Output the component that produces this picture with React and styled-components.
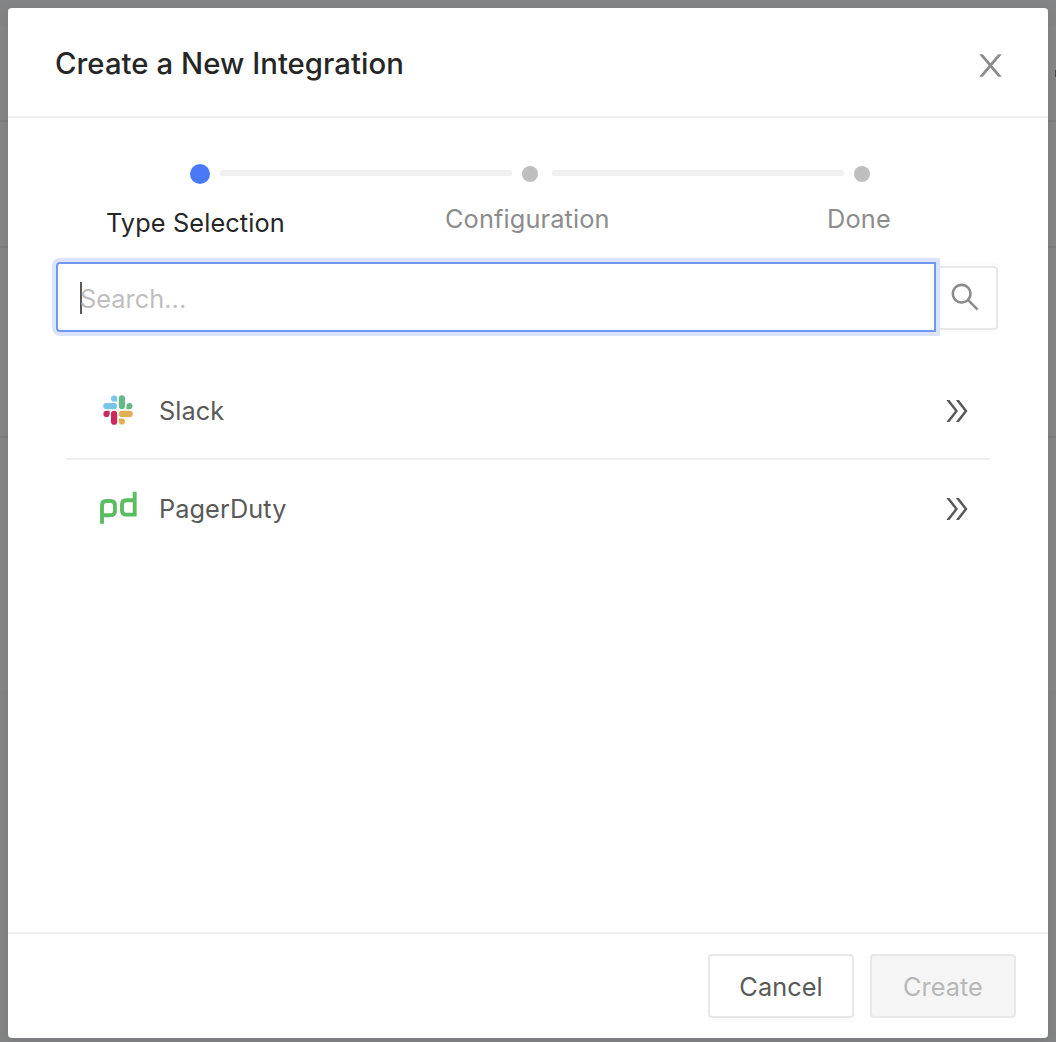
import React from 'react';
import styled, { createGlobalStyle, css } from 'styled-components';

const GlobalStyle = createGlobalStyle`
  * { box-sizing: border-box; }
  body {
    margin: 0;
    font-family: Inter, "Liberation Sans", sans-serif;
    font-size: 25.3px;
    color: #595959;
    overflow: hidden;
  }
  button, input { font: inherit; letter-spacing: inherit; }
  svg { display: block; }
`;

const Page = styled.div`
  position: relative;
  height: 1042px;
  display: flex;
  flex-direction: column;
  overflow: hidden;
`;

const Band = styled.div`
  flex: none;
  height: ${(p) => p.$height}px;
  display: flex;
  align-items: center;
  justify-content: flex-end;
  background: ${(p) => (p.$cool ? '#828486' : '#868686')};
  ${(p) => p.$ruled && css`border-bottom: 2px solid #7d7d7d;`}
`;

const BandMark = styled.span`
  width: 1px;
  height: 7px;
  background: #4a4a4a;
`;

const Overlay = styled.div`
  position: absolute;
  inset: 0;
  padding: 8px 8px 4px;
  display: flex;
`;

const Dialog = styled.section`
  flex: 1;
  display: flex;
  flex-direction: column;
  background: #fff;
  border-radius: 4px;
  box-shadow: 0 4px 16px rgba(0, 0, 0, 0.08);
`;

const Header = styled.header`
  height: 110px;
  padding: 0 42px 0 47px;
  display: flex;
  align-items: center;
  justify-content: space-between;
  border-bottom: 2px solid #efefef;
`;

const Title = styled.h1`
  margin: 0;
  padding-top: 4px;
  font-size: 29.3px;
  line-height: 44px;
  font-weight: 500;
  letter-spacing: 0.05px;
  color: #262626;
`;

const CloseButton = styled.button`
  padding: 6px 0 0;
  border: 0;
  background: none;
  color: #8c8c8c;
`;

const Body = styled.main`
  flex: 1;
  padding: 38px 50px 0 48px;
`;

const Steps = styled.ol`
  height: 106px;
  margin: 0;
  padding: 0;
  list-style: none;
  display: grid;
  grid-template-columns: 304px 332px 306px;
`;

const Step = styled.li`
  display: flex;
  flex-direction: column;
`;

const Track = styled.div`
  height: 36px;
  padding-left: ${(p) => p.$indent}px;
  display: flex;
  align-items: center;
`;

const Dot = styled.span`
  flex: none;
  width: ${(p) => (p.$active ? 20 : 16)}px;
  height: ${(p) => (p.$active ? 20 : 16)}px;
  border-radius: 50%;
  background: ${(p) => (p.$active ? '#4a79f8' : '#bfbfbf')};
`;

const Line = styled.span`
  flex: none;
  width: 292px;
  height: 6px;
  margin: 0 10px 2px ${(p) => p.$gap}px;
  border-radius: 2px;
  background: #f0f0f0;
`;

const StepLabel = styled.span`
  padding-left: ${(p) => p.$indent}px;
  margin-top: ${(p) => (p.$active ? 13 : 9)}px;
  line-height: 36px;
  white-space: nowrap;
  letter-spacing: ${(p) => p.$track}px;
  color: ${(p) => (p.$active ? '#262626' : '#8c8c8c')};
`;

const SearchBar = styled.div`
  display: flex;
  align-items: center;
`;

const SearchField = styled.div`
  z-index: 1;
  width: 880px;
  height: 70px;
  padding: 0 22px;
  display: flex;
  align-items: center;
  border: 2px solid #7096f8;
  border-radius: 4px 0 0 4px;
  background: #fff;
  box-shadow: 0 0 0 4px #dbe3fd;
`;

const Caret = styled.span`
  width: 2px;
  height: 32px;
  margin: 2px -2px 0 0;
  background: #595959;
`;

const Placeholder = styled.span`
  padding-top: 2px;
  color: #bfbfbf;
  letter-spacing: 0.05px;
`;

const SearchButton = styled.button`
  width: 62px;
  height: 64px;
  margin-top: 2px;
  padding: 0 0 2px 14px;
  display: flex;
  align-items: center;
  border: 2px solid #e8e8e8;
  border-left: 0;
  border-radius: 0 4px 4px 0;
  background: #fff;
  color: #8c8c8c;
  box-shadow: 0 0 0 4px rgba(0, 0, 0, 0.012);
  clip-path: inset(-4px 0 -4px 0);
`;

const List = styled.ul`
  margin: 30px 8px 0 10px;
  padding: 0;
  list-style: none;
`;

const Item = styled.li`
  height: 96px;
  padding: 0 19px 0 32px;
  display: flex;
  align-items: center;
  & + & { border-top: 2px solid #efefef; height: 98px; }
`;

const Logo = styled.span`
  width: 40px;
  height: 40px;
`;

const ItemName = styled.span`
  flex: 1;
  padding-left: 21px;
  letter-spacing: 0.08px;
`;

const Chevrons = styled.span`
  padding-top: 2px;
`;

const Footer = styled.footer`
  height: 106px;
  padding: 0 32px;
  display: flex;
  align-items: center;
  justify-content: flex-end;
  gap: 16px;
  border-top: 2px solid #efefef;
`;

const Button = styled.button`
  width: 146px;
  height: 64px;
  padding: 0;
  border: 2px solid #e8e8e8;
  border-radius: 4px;
  background: ${(p) => (p.disabled ? '#f5f5f5' : '#fff')};
  color: ${(p) => (p.disabled ? '#b8b8b8' : '#595959')};
  letter-spacing: 0.05px;
  box-shadow: ${(p) => (p.disabled ? 'none' : '0 4px 0 rgba(0, 0, 0, 0.015)')};
`;

const GLYPHS = {
  close: 'M563.8 512l262.5-312.9c4.4-5.2.7-13.1-6.1-13.1h-79.8c-4.7 0-9.2 2.1-12.3 5.7L511.6 449.8 295.1 191.7c-3-3.6-7.5-5.7-12.3-5.7H203c-6.8 0-10.5 7.9-6.1 13.1L459.4 512 196.9 824.9A7.95 7.95 0 0 0 203 838h79.8c4.7 0 9.2-2.1 12.3-5.7l216.5-258.1 216.5 258.1c3 3.6 7.5 5.7 12.3 5.7h79.8c6.8 0 10.5-7.9 6.1-13.1L563.8 512z',
  search: 'M909.6 854.5L649.9 594.8C690.2 542.7 712 479 712 412c0-80.2-31.3-155.4-87.9-212.1-56.6-56.7-132-87.9-212.1-87.9s-155.5 31.3-212.1 87.9C143.2 256.5 112 331.8 112 412c0 80.1 31.3 155.5 87.9 212.1C256.5 680.8 331.8 712 412 712c67 0 130.6-21.8 182.7-62l259.7 259.6a8.2 8.2 0 0 0 11.6 0l43.6-43.5a8.2 8.2 0 0 0 0-11.6zM570.4 570.4C528 612.7 471.8 636 412 636s-116-23.3-158.4-65.6C211.3 528 188 471.8 188 412s23.3-116.1 65.6-158.4C296 211.3 352.2 188 412 188s116.1 23.2 158.4 65.6S636 352.2 636 412s-23.3 116.1-65.6 158.4z',
  doubleRight: 'M533.2 492.3L277.9 166.1c-3-3.9-7.7-6.1-12.6-6.1H188c-6.7 0-10.4 7.7-6.3 12.9L447.1 512 181.7 851.1A7.98 7.98 0 0 0 188 864h77.3c4.9 0 9.6-2.3 12.6-6.1l255.3-326.1c9.1-11.7 9.1-27.9 0-39.5zm304 0L581.9 166.1c-3-3.9-7.7-6.1-12.6-6.1H492c-6.7 0-10.4 7.7-6.3 12.9L751.1 512 485.7 851.1A7.98 7.98 0 0 0 492 864h77.3c4.9 0 9.6-2.3 12.6-6.1l255.3-326.1c9.1-11.7 9.1-27.9 0-39.5z',
};

const Icon = ({ name, size }) => (
  <svg width={size} height={size} viewBox="64 64 896 896" fill="currentColor" aria-hidden="true">
    <path d={GLYPHS[name]} />
  </svg>
);

const SlackLogo = () => (
  <svg width="40" height="40" viewBox="0 0 40 40">
    <g fill="#78c5ea">
      <path d="M19.2 11.6H16.1A3.1 3.1 0 1 1 19.2 8.5Z" />
      <rect x="5.2" y="13" width="14" height="6.2" rx="3.1" />
    </g>
    <g fill="#65b985">
      <rect x="20.8" y="5.2" width="6.2" height="14" rx="3.1" />
      <path d="M28.4 19.2V16.1A3.1 3.1 0 1 1 31.5 19.2Z" />
    </g>
    <g fill="#dfb152">
      <rect x="20.8" y="20.8" width="14" height="6.2" rx="3.1" />
      <path d="M20.8 28.4H23.9A3.1 3.1 0 1 1 20.8 31.5Z" />
    </g>
    <g fill="#ca2a5d">
      <path d="M11.6 20.8V23.9A3.1 3.1 0 1 1 8.5 20.8Z" />
      <rect x="13" y="20.8" width="6.2" height="14" rx="3.1" />
    </g>
  </svg>
);

const PagerDutyLogo = () => (
  <svg width="40" height="40" viewBox="0 0 40 40" fill="none" stroke="#5bbd61" strokeWidth="3.9">
    <path d="M4 35.8V17.4Q4 13 8.4 13H12.6Q16.9 13 16.9 17.2V23Q16.9 27.2 12.6 27.2H4" />
    <path d="M36.7 3.7V26.6H28.3Q24 26.6 24 22.4V16.4Q24 12.2 28.3 12.2H36.7" />
  </svg>
);

const bands = [
  { height: 26, cool: true },
  { height: 96, ruled: true, mark: true },
  { height: 126, ruled: true },
  { height: 190, ruled: true },
  { height: 252 },
  { height: 352, cool: true },
];

const steps = [
  { label: 'Type Selection', indent: 134, labelIndent: 50, track: 0.12, active: true, gap: 10 },
  { label: 'Configuration', indent: 162, labelIndent: 85, track: 0.14, gap: 14 },
  { label: 'Done', indent: 162, labelIndent: 135, track: 0.2 },
];

const integrations = [
  { name: 'Slack', Mark: SlackLogo },
  { name: 'PagerDuty', Mark: PagerDutyLogo },
];

export default function App() {
  return (
    <>
      <GlobalStyle />
      <Page>
        {bands.map((b, i) => (
          <Band key={i} $height={b.height} $cool={b.cool} $ruled={b.ruled}>{b.mark && <BandMark />}</Band>
        ))}
        <Overlay>
          <Dialog role="dialog" aria-label="Create a New Integration">
            <Header>
              <Title>Create a New Integration</Title>
              <CloseButton aria-label="Close"><Icon name="close" size={31} /></CloseButton>
            </Header>
            <Body>
              <Steps>
                {steps.map((s) => (
                  <Step key={s.label}>
                    <Track $indent={s.indent}>
                      <Dot $active={s.active} />
                      {s.gap && <Line $gap={s.gap} />}
                    </Track>
                    <StepLabel $indent={s.labelIndent} $active={s.active} $track={s.track}>{s.label}</StepLabel>
                  </Step>
                ))}
              </Steps>
              <SearchBar>
                <SearchField>
                  <Caret />
                  <Placeholder>Search...</Placeholder>
                </SearchField>
                <SearchButton aria-label="Search"><Icon name="search" size={30} /></SearchButton>
              </SearchBar>
              <List>
                {integrations.map(({ name, Mark }) => (
                  <Item key={name}>
                    <Logo><Mark /></Logo>
                    <ItemName>{name}</ItemName>
                    <Chevrons><Icon name="doubleRight" size={28} /></Chevrons>
                  </Item>
                ))}
              </List>
            </Body>
            <Footer>
              <Button>Cancel</Button>
              <Button disabled>Create</Button>
            </Footer>
          </Dialog>
        </Overlay>
      </Page>
    </>
  );
}
